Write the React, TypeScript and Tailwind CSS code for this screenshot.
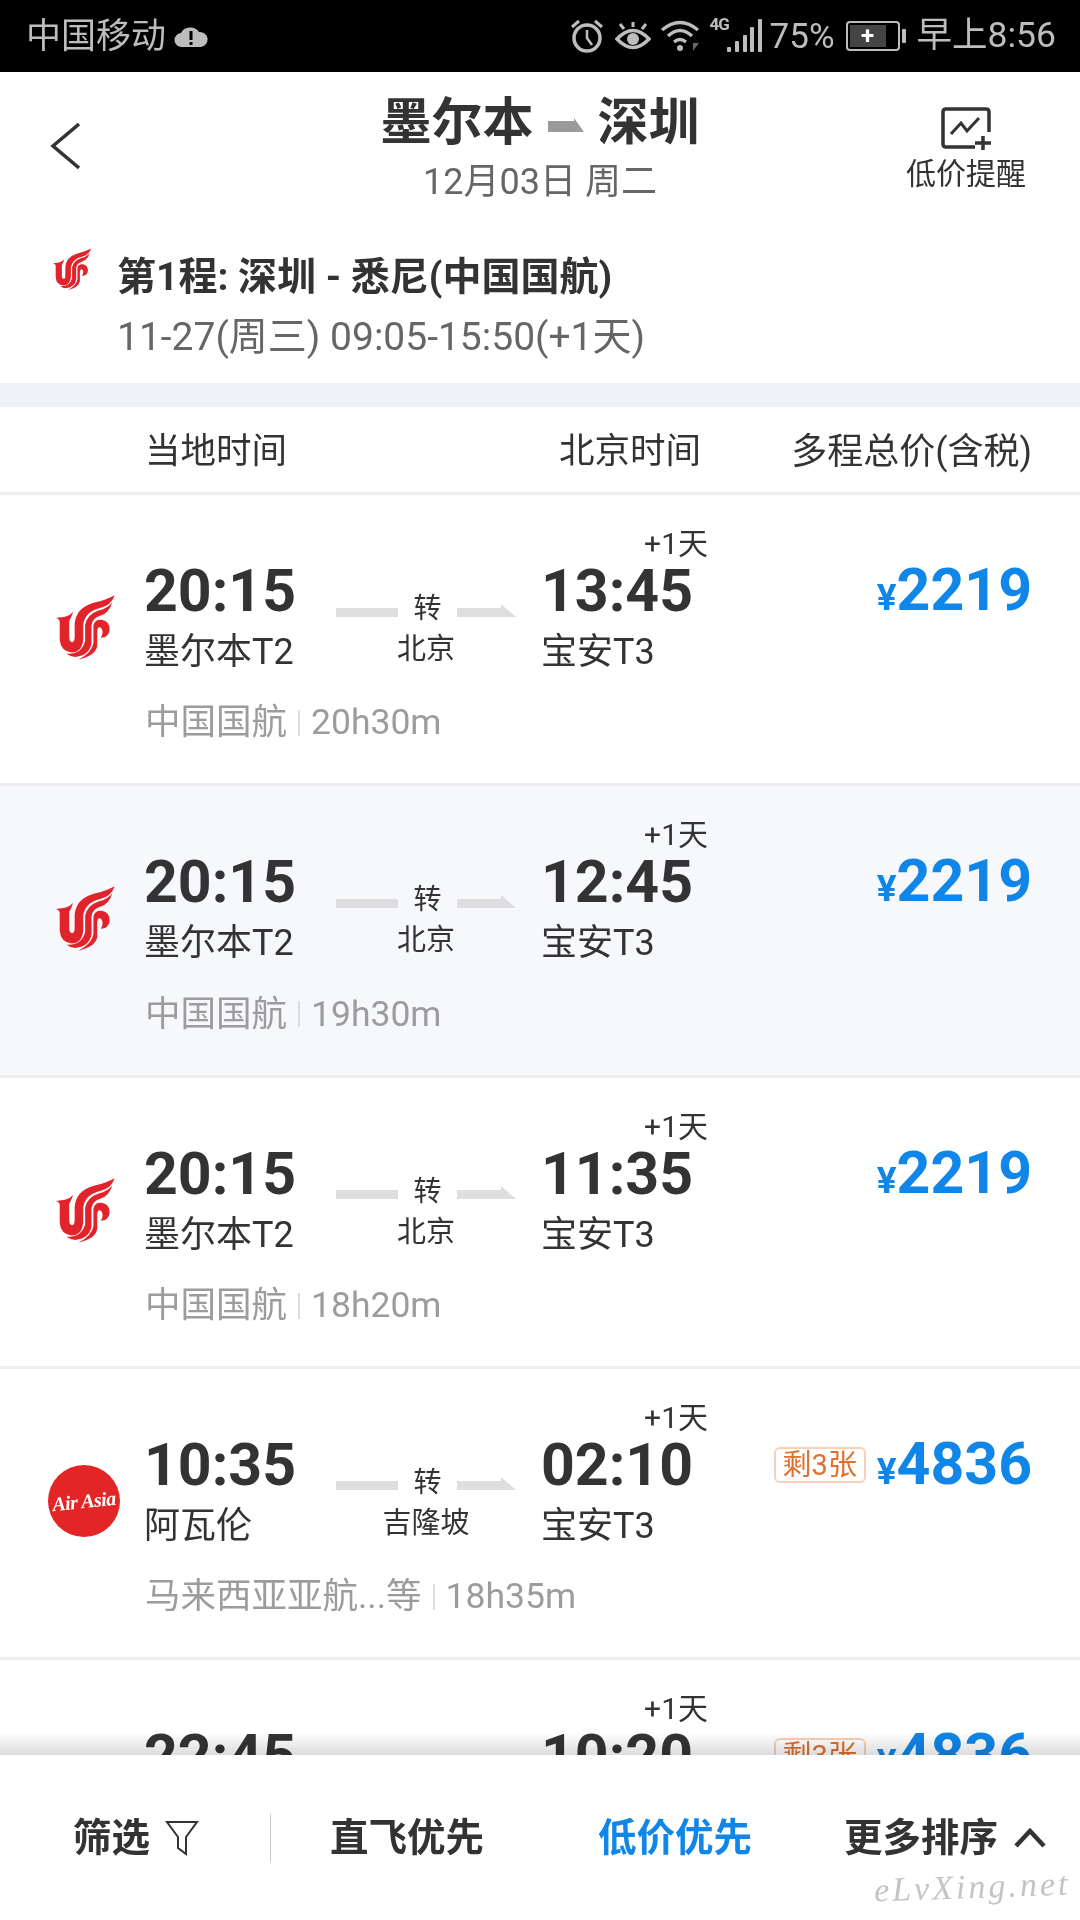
const flights = [
  { dep: '20:15', from: '墨尔本T2', via: '北京', arr: '13:45', airline: '中国国航', dur: '20h30m', price: '2219', bg: 'bg-white', logo: 'ca' },
  { dep: '20:15', from: '墨尔本T2', via: '北京', arr: '12:45', airline: '中国国航', dur: '19h30m', price: '2219', bg: 'bg-[#f6f8fc]', logo: 'ca' },
  { dep: '20:15', from: '墨尔本T2', via: '北京', arr: '11:35', airline: '中国国航', dur: '18h20m', price: '2219', bg: 'bg-white', logo: 'ca' },
  { dep: '10:35', from: '阿瓦伦', via: '吉隆坡', arr: '02:10', airline: '马来西亚亚航...等', dur: '18h35m', price: '4836', bg: 'bg-white', logo: 'aa', left: '剩3张' },
  { dep: '22:45', from: '阿瓦伦', via: '吉隆坡', arr: '10:20', airline: '马来西亚亚航...等', dur: '20h35m', price: '4836', bg: 'bg-white', logo: 'aa', left: '剩3张' },
]

function AirChinaLogo({ className }: { className: string }) {
  return (
    <svg viewBox="65 35 195 210" className={className} fill="#e1232b">
      <path d="M70 112 L100 108 Q113 106 125 93 Q119 112 113 120 L113 170 Q113 188 122 188 Q130 188 130 170 L130 130 Q134 80 190 64 Q230 54 256 40 Q245 72 210 80 Q165 90 157 130 L157 180 Q152 220 120 220 Q86 216 83 180 L83 125 Q83 115 70 112 Z" />
      <path d="M163 132 Q170 100 205 88 Q235 81 248 62 Q240 95 210 105 Q186 112 183 135 L183 190 Q178 228 132 234 Q118 234 104 224 Q150 228 163 185 Z" />
      <path d="M189 135 Q193 115 215 117 Q242 122 240 150 Q237 172 212 174 Q220 160 217 150 Q214 140 207 141 Q201 143 201 155 L201 200 Q196 230 142 243 Q186 218 189 190 Z" />
    </svg>
  )
}

function AirAsiaLogo() {
  return (
    <div className="w-[72px] h-[72px] rounded-full bg-[#e32526] flex items-center justify-center">
      <span className="font-['Liberation_Serif',serif] italic font-bold text-[20px] leading-none text-white -rotate-6 whitespace-nowrap tracking-[-0.5px]">Air Asia</span>
    </div>
  )
}

function HalfArrow({ className }: { className: string }) {
  return (
    <svg viewBox="0 0 59 13" className={className} fill="#dedede">
      <polygon points="0,4 44,4 44,0 59,13 0,13" />
    </svg>
  )
}

function FlightRow({ f }: { f: (typeof flights)[number] }) {
  return (
    <div className={`h-[291.3px] shrink-0 border-b-[3px] border-[#eeeeee] ${f.bg}`}>
      <div className="flex">
        <div className="w-[144px] shrink-0 pt-[96px]">
          {f.logo === 'ca' ? (
            <AirChinaLogo className="w-[62px] h-[72px] ml-[54px]" />
          ) : (
            <div className="ml-[48px]"><AirAsiaLogo /></div>
          )}
        </div>
        <div className="w-[192px] shrink-0 pt-[65px]">
          <div className="h-[62px] leading-[62px] text-[59px] font-bold text-[#333]">{f.dep}</div>
          <div className="h-[58px] leading-[58px] mt-[1px] text-[36px] text-[#333]">{f.from}</div>
        </div>
        <div className="w-[180px] shrink-0 pt-[94px]">
          <div className="h-[40px] flex items-center justify-between">
            <div className="w-[62px] h-[9px] mt-[6px] bg-[#dedede]" />
            <span className="text-[28px] leading-[40px] text-[#333]">转</span>
            <HalfArrow className="w-[59px] h-[13px] mt-[2px]" />
          </div>
          <div className="h-[40px] leading-[40px] text-[29px] text-[#333] text-center">{f.via}</div>
        </div>
        <div className="ml-[25px] w-[167px] shrink-0 pt-[34px]">
          <div className="h-[30px] leading-[30px] text-[30px] text-[#333] text-right">+1天</div>
          <div className="h-[62px] leading-[62px] mt-[1px] text-[59px] font-bold text-[#333]">{f.arr}</div>
          <div className="h-[58px] leading-[58px] mt-[1px] text-[36px] text-[#333]">宝安T3</div>
        </div>
        <div className="flex-1 pt-[64px] pr-[48px] flex justify-end items-start">
          {f.left && (
            <div className="h-[36px] w-[92px] mt-[14px] mr-[11px] border-2 border-[#f8d2b8] rounded-[6px] text-[#e0702f] text-[29px] leading-[32px] text-center whitespace-nowrap">{f.left}</div>
          )}
          <div className="h-[62px] leading-[62px] font-bold text-[#0f86e8] whitespace-nowrap">
            <span className="text-[37px]">¥</span>
            <span className="text-[59px]">{f.price}</span>
          </div>
        </div>
      </div>
      <div className="flex items-center h-[44px] mt-[20px] pl-[145px] text-[35.5px] text-[#9c9c9c]">
        <span>{f.airline}</span>
        <div className="w-[2px] h-[26px] bg-[#dddddd] mx-[11px]" />
        <span>{f.dur}</span>
      </div>
    </div>
  )
}

export default function App() {
  return (
    <div className="relative w-[1080px] h-[1920px] overflow-hidden flex flex-col bg-white font-[Roboto,'Noto_Sans_CJK_SC',sans-serif]">
      {/* status bar */}
      <div className="h-[72px] shrink-0 bg-black flex items-center justify-between pl-[26px] pr-[24px] text-[#bdbdbd]">
        <div className="flex items-center">
          <span className="text-[35px] leading-none">中国移动</span>
          <svg viewBox="0 0 34 24" className="w-[34px] h-[24px] ml-[8px]" fill="#bdbdbd">
            <path d="M8 23 A7 7 0 0 1 7 9 A10 9 0 0 1 25 8 A7.5 7.5 0 0 1 27 23 Z" />
            <rect x="15.5" y="7" width="3" height="9" fill="#000" />
            <rect x="15.5" y="18" width="3" height="3" fill="#000" />
          </svg>
        </div>
        <div className="flex items-center">
          <svg viewBox="0 0 34 34" className="w-[34px] h-[34px]" fill="none" stroke="#bdbdbd" strokeWidth="3.5">
            <circle cx="17" cy="19" r="13" />
            <path d="M17 11 V19 L22 26" strokeWidth="2.5" />
            <path d="M2 8 L9 2 M32 8 L25 2" strokeWidth="3" />
          </svg>
          <svg viewBox="0 0 36 32" className="w-[36px] h-[32px] ml-[11px]" fill="none" stroke="#bdbdbd" strokeWidth="3.5">
            <path d="M2 19 Q18 2 34 19 Q18 36 2 19 Z" />
            <circle cx="18" cy="19" r="6" fill="#bdbdbd" stroke="none" />
            <path d="M18 2 V7 M5 4 L9 9 M31 4 L27 9" strokeWidth="3" />
          </svg>
          <svg viewBox="0 0 40 34" className="w-[40px] h-[34px] ml-[9px]" fill="none" stroke="#bdbdbd" strokeWidth="3.5">
            <path d="M2 11 Q20 -4 38 11" />
            <path d="M8 17 Q20 6 32 17" />
            <path d="M14 23 Q20 18 26 23" />
            <circle cx="20" cy="29" r="3" fill="#bdbdbd" stroke="none" />
            <path d="M33 24 L39 24 L33 32 Z" fill="#666" stroke="none" />
          </svg>
          <div className="ml-[10px] flex items-end relative w-[53px] h-[34px]">
            <span className="absolute left-0 top-[-3px] text-[17px] leading-none font-bold tracking-[-1px]">4G</span>
            <svg viewBox="0 0 36 34" className="absolute right-0 bottom-0 w-[36px] h-[34px]" fill="#bdbdbd">
              <rect x="0" y="28" width="4" height="5" rx="1" />
              <rect x="8" y="22" width="4" height="11" rx="1" />
              <rect x="16" y="16" width="4" height="17" rx="1" />
              <rect x="23" y="8" width="4" height="25" rx="1" />
              <rect x="31" y="0" width="4" height="33" rx="1" />
            </svg>
          </div>
          <span className="text-[35px] leading-none ml-[7px]">75%</span>
          <div className="ml-[11px] w-[54px] h-[30px] border-2 border-[#bdbdbd] rounded-[4px] p-[2px] flex">
            <div className="w-[36px] h-full bg-[#444] flex items-center justify-center text-white text-[24px] leading-none font-bold">+</div>
          </div>
          <div className="w-[4px] h-[14px] bg-[#bdbdbd] rounded-[1px] ml-[2px]" />
          <span className="text-[35.5px] leading-none ml-[11px]">早上8:56</span>
        </div>
      </div>

      {/* header */}
      <div className="h-[148px] shrink-0 flex">
        <div className="w-[300px] pl-[50px] pt-[50px]">
          <svg viewBox="0 0 30 48" className="w-[30px] h-[48px]" fill="none" stroke="#333" strokeWidth="3.5">
            <path d="M29 2 L3 24 L29 46" />
          </svg>
        </div>
        <div className="w-[480px] flex flex-col items-center pt-[24px]">
          <div className="flex items-center h-[54px] text-[51px] leading-[54px] font-bold text-[#333]">
            <span>墨尔本</span>
            <svg viewBox="0 0 36 14" className="w-[36px] h-[14px] mx-[14px] mt-[4px]" fill="#9a9a9a">
              <polygon points="0,3 26,3 26,0 36,14 0,14" />
            </svg>
            <span>深圳</span>
          </div>
          <div className="text-[36px] leading-[40px] mt-[12px] text-[#666] whitespace-nowrap">12月03日 周二</div>
        </div>
        <div className="flex-1 flex flex-col items-center pt-[34px] pl-[72px]">
          <svg viewBox="0 0 50 44" className="w-[50px] h-[44px]" fill="none" stroke="#333" strokeWidth="3.5">
            <path d="M34 41 H5 Q2 41 2 38 V6 Q2 3 5 3 H45 Q48 3 48 6 V26" />
            <path d="M10 28 L20 17 L26 25 L38 12" strokeWidth="3" />
            <path d="M42 30 V44 M34 37 H50" strokeWidth="3.5" />
          </svg>
          <div className="text-[30px] leading-[36px] mt-[6px] text-[#333] whitespace-nowrap">低价提醒</div>
        </div>
      </div>

      {/* selected leg */}
      <div className="h-[163px] shrink-0 flex">
        <div className="w-[117px] shrink-0 pl-[52px] pt-[26px]">
          <AirChinaLogo className="w-[40px] h-[46px]" />
        </div>
        <div className="pt-[32px]">
          <div className="h-[50px] leading-[50px] text-[39px] font-bold text-[#333] whitespace-nowrap">第1程: 深圳 - 悉尼(中国国航)</div>
          <div className="h-[50px] leading-[50px] mt-[10px] text-[39px] text-[#666] whitespace-nowrap">11-27(周三) 09:05-15:50(+1天)</div>
        </div>
      </div>

      <div className="h-[24px] shrink-0 bg-[#eef1f6]" />

      {/* column titles */}
      <div className="h-[88px] shrink-0 flex items-center pt-[4px] border-b-[3px] border-[#eeeeee] text-[35.5px] text-[#333] pr-[48px] whitespace-nowrap">
        <span className="ml-[145px]">当地时间</span>
        <span className="ml-[272px]">北京时间</span>
        <span className="ml-auto text-[36px]">多程总价(含税)</span>
      </div>

      {/* flight list */}
      <div className="flex-1 min-h-0 overflow-hidden flex flex-col relative">
        {flights.map((f, i) => (
          <FlightRow key={i} f={f} />
        ))}
        <div className="absolute left-0 right-0 bottom-0 h-[22px] bg-gradient-to-b from-white to-[#dcdcdc] mix-blend-multiply" />
      </div>

      {/* bottom sort bar */}
      <div className="h-[165px] shrink-0 bg-white flex items-center text-[38.5px] font-bold text-[#333] whitespace-nowrap">
        <span className="ml-[73px]">筛选</span>
        <svg viewBox="0 0 34 36" className="w-[34px] h-[36px] ml-[15px]" fill="none" stroke="#333" strokeWidth="2">
          <path d="M2 2 H32 L21 17 V34 L13 28 V17 Z" />
        </svg>
        <div className="w-[1px] h-[48px] bg-[#cccccc] ml-[71px]" />
        <span className="ml-[59px]">直飞优先</span>
        <span className="ml-[114px] text-[#0f86e8]">低价优先</span>
        <span className="ml-[92px]">更多排序</span>
        <svg viewBox="0 0 32 20" className="w-[32px] h-[20px] ml-[16px]" fill="none" stroke="#333" strokeWidth="4.5">
          <path d="M2 18 L16 3 L30 18" />
        </svg>
      </div>

      <div className="absolute right-[10px] bottom-[16px] font-['Liberation_Serif',serif] italic text-[34px] leading-none tracking-[3px] -rotate-2 text-[#c4c4c4]">eLvXing.net</div>
    </div>
  )
}
